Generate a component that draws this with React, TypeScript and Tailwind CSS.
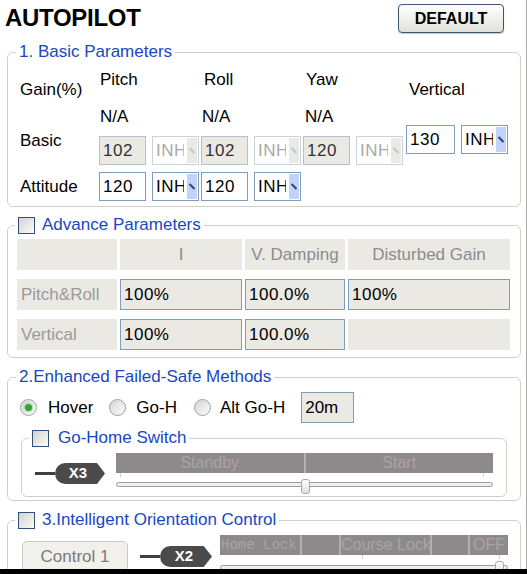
import React from 'react';

interface BoxProps {
  value: string;
  disabled?: boolean;
  width?: string;
}

function Box({ value, disabled, width = 'w-[47px]' }: BoxProps) {
  return (
    <div
      className={`${width} h-[29px] shrink-0 border pl-[3px] text-[17px] leading-[27px] tracking-[0.5px] ${
        disabled ? 'border-[#b4c1ce] bg-[#ebe9e4] text-[#333]' : 'border-[#7f9db9] bg-white text-black'
      }`}
    >
      {value}
    </div>
  );
}

function Select({ disabled }: { disabled?: boolean }) {
  return (
    <div
      className={`ml-[6px] flex h-[29px] w-[47px] shrink-0 border bg-white ${
        disabled ? 'border-[#c9d3dd] text-[#a9a9a9]' : 'border-[#7f9db9] text-black'
      }`}
    >
      <span className="w-[31px] shrink-0 overflow-hidden whitespace-nowrap pl-[3px] text-[17px] leading-[27px] tracking-[0.5px]">
        INH
      </span>
      <span className="flex-1" />
      <span
        className={`my-[1px] mr-[1px] flex w-[10px] items-center justify-center ${
          disabled ? 'bg-[#e9e9e5]' : 'bg-[#c2d3f7]'
        }`}
      >
        <span className={`h-[7px] w-[2px] -rotate-45 ${disabled ? 'bg-[#c4c4c4]' : 'bg-[#24468f]'}`} />
      </span>
    </div>
  );
}

function Check() {
  return (
    <span className="block h-[17px] w-[17px] shrink-0 border border-[#30507a] bg-linear-to-br from-[#d3d3cd] to-[#fbfbf9]" />
  );
}

function Radio({ on }: { on?: boolean }) {
  return (
    <span className="flex h-[17px] w-[17px] shrink-0 items-center justify-center rounded-full border border-[#98a3ad] bg-linear-to-br from-[#d6d6d0] to-[#fcfcfa]">
      {on && <span className="h-[7px] w-[7px] rounded-full bg-[#36a336] shadow-[0_0_2px_1px_#a6dca6]" />}
    </span>
  );
}

function Connector({ label, pill = 'w-[50px]' }: { label: string; pill?: string }) {
  return (
    <div className="flex shrink-0 items-center">
      <span className="h-[3px] w-[20px] bg-[#3f3f3f]" />
      <span
        className={`${pill} flex h-[21px] items-center justify-center rounded-l-full bg-[#4a4a4a] pr-[4px] text-[15px] font-bold text-white [clip-path:polygon(0_0,84%_0,100%_50%,84%_100%,0_100%)]`}
      >
        {label}
      </span>
    </div>
  );
}

function Divider() {
  return <span className="w-[2px] shrink-0 bg-[#b3afb1]" />;
}

export default function App() {
  const cellLabel = 'flex h-[31px] items-center bg-[#ebe9e4] pl-[4px] text-[17px] text-[#9a9a9a]';
  const cellHead = 'flex h-[31px] items-center justify-center bg-[#ebe9e4] text-[17px] text-[#8c8c8c]';
  const cellValue = 'flex h-[31px] items-center border border-[#7f9db9] bg-[#ebe9e4] pl-[3px] text-[17px] tracking-[0.5px] text-black';

  return (
    <div className="flex h-[574px] w-[527px] flex-col overflow-hidden bg-white font-['Liberation_Sans',Arial,sans-serif] text-black">
      <div className="flex-1 overflow-hidden border-r border-r-[#a9a9a9]">
        {/* header */}
        <div className="flex items-start justify-between pl-[5px] pr-[22px] pt-[4px]">
          <h1 className="text-[24px] font-bold leading-[28px] tracking-[-0.3px]">AUTOPILOT</h1>
          <button className="h-[29px] w-[106px] rounded-[4px] border border-[#3d5570] bg-linear-to-b from-white to-[#e1e1db] text-[16px] font-bold shadow-[0_1px_1px_#c8c8c8]">
            DEFAULT
          </button>
        </div>

        {/* 1. basic */}
        <fieldset className="ml-[7px] mt-[9px] w-[514px] rounded-[6px] border border-[#d0d0c6] pb-[5px]">
          <legend className="ml-[8px] px-[3px] text-[17px] leading-[20px] text-[#1747c4]">1. Basic Parameters</legend>
          <div className="flex pl-[12px] text-[17px] leading-[20px]">
            <div className="flex w-[79px] shrink-0 flex-col">
              <span className="mt-[18px]">Gain(%)</span>
              <span className="mt-[31px]">Basic</span>
              <span className="mt-[26px]">Attitude</span>
            </div>
            <div className="flex w-[102px] shrink-0 flex-col">
              <span className="mt-[8px] pl-[1px]">Pitch</span>
              <span className="mt-[17px] pl-[1px]">N/A</span>
              <div className="mt-[9px] flex">
                <Box value="102" disabled />
                <Select disabled />
              </div>
              <div className="mt-[7px] flex">
                <Box value="120" />
                <Select />
              </div>
            </div>
            <div className="flex w-[102px] shrink-0 flex-col">
              <span className="mt-[8px] pl-[3px]">Roll</span>
              <span className="mt-[17px] pl-[1px]">N/A</span>
              <div className="mt-[9px] flex">
                <Box value="102" disabled />
                <Select disabled />
              </div>
              <div className="mt-[7px] flex">
                <Box value="120" />
                <Select />
              </div>
            </div>
            <div className="flex w-[102px] shrink-0 flex-col">
              <span className="mt-[8px] pl-[3px]">Yaw</span>
              <span className="mt-[17px] pl-[2px]">N/A</span>
              <div className="mt-[9px] flex">
                <Box value="120" disabled />
                <Select disabled />
              </div>
            </div>
            <div className="flex w-[102px] shrink-0 flex-col pl-[1px]">
              <span className="mt-[18px] pl-[3px]">Vertical</span>
              <div className="mt-[25px] flex">
                <Box value="130" width="w-[49px]" />
                <Select />
              </div>
            </div>
          </div>
        </fieldset>

        {/* advance */}
        <fieldset className="ml-[7px] mt-[8px] w-[514px] rounded-[6px] border border-[#d0d0c6] pb-[7px]">
          <legend className="ml-[7px] px-[3px]">
            <span className="flex items-center gap-[7px] text-[17px] leading-[20px] text-[#1747c4]">
              <Check />
              Advance Parameters
            </span>
          </legend>
          <div className="grid grid-cols-[100px_122px_100px_162px] gap-x-[3px] gap-y-[9px] pl-[9px] pt-[4px]">
            <div className={cellHead} />
            <div className={cellHead}>I</div>
            <div className={cellHead}>V. Damping</div>
            <div className={cellHead}>Disturbed Gain</div>

            <div className={cellLabel}>Pitch&amp;Roll</div>
            <div className={cellValue}>100%</div>
            <div className={cellValue}>100.0%</div>
            <div className={cellValue}>100%</div>

            <div className={cellLabel}>Vertical</div>
            <div className={cellValue}>100%</div>
            <div className={cellValue}>100.0%</div>
            <div className={cellHead} />
          </div>
        </fieldset>

        {/* 2. failsafe */}
        <fieldset className="ml-[7px] mt-[9px] w-[514px] rounded-[6px] border border-[#d0d0c6] pb-[3px]">
          <legend className="ml-[8px] px-[3px] text-[17px] leading-[20px] text-[#1747c4]">
            2.Enhanced Failed-Safe Methods
          </legend>
          <div className="mt-[5px] flex h-[31px] items-center pl-[12px] text-[17px]">
            <Radio on />
            <span className="ml-[11px]">Hover</span>
            <span className="ml-[16px]"><Radio /></span>
            <span className="ml-[10px]">Go-H</span>
            <span className="ml-[17px]"><Radio /></span>
            <span className="ml-[9px]">Alt Go-H</span>
            <div className="ml-[16px] flex h-[31px] w-[53px] items-center border border-[#7f9db9] bg-[#ebe9e4] pl-[3px]">
              20m
            </div>
          </div>

          <fieldset className="ml-[13px] mt-[5px] w-[486px] rounded-[6px] border border-[#d0d0c6] pb-[9px]">
            <legend className="ml-[7px] px-[3px]">
              <span className="flex items-center gap-[9px] text-[17px] leading-[20px] text-[#1747c4]">
                <Check />
                Go-Home Switch
              </span>
            </legend>
            <div className="flex items-start pl-[13px] pt-[5px]">
              <div className="mt-[10px]">
                <Connector label="X3" />
              </div>
              <div className="ml-[11px] flex w-[377px] flex-col">
                <div className="flex h-[20px] bg-[#8e8a8c] text-[16px] leading-[20px] text-[#a8a4a6]">
                  <span className="flex-1 text-center">Standby</span>
                  <Divider />
                  <span className="flex-1 text-center">Start</span>
                </div>
                <div className="flex h-[4px] justify-between pl-[4px] pr-[9px]">
                  <span className="w-[1px] bg-[#cfcfcf]" />
                  <span className="w-[1px] bg-[#cfcfcf]" />
                </div>
                <div className="relative mt-[5px] h-[5px] rounded-full border border-[#9d9d9d] bg-[#efefef]">
                  <span className="absolute left-[184px] top-[-4px] h-[15px] w-[9px] rounded-[3px] border border-[#a9a9a9] bg-linear-to-b from-white to-[#dedede]" />
                </div>
              </div>
            </div>
          </fieldset>
        </fieldset>

        {/* 3. orientation */}
        <fieldset className="ml-[7px] mt-[9px] w-[514px] rounded-[6px] border border-[#d0d0c6] pb-[10px]">
          <legend className="ml-[7px] px-[3px]">
            <span className="flex items-center gap-[7px] text-[17px] leading-[20px] text-[#1747c4]">
              <Check />
              3.Intelligent Orientation Control
            </span>
          </legend>
          <div className="flex items-start pl-[14px] pt-[5px]">
            <button className="mt-[6px] h-[31px] w-[106px] shrink-0 rounded-[5px] border border-[#cac9c0] bg-[#f1f0ea] text-[17px] text-[#7a7a7a]">
              Control 1
            </button>
            <div className="ml-[12px] mt-[11px]">
              <Connector label="X2" pill="w-[52px]" />
            </div>
            <div className="ml-[8px] flex w-[288px] flex-col">
              <div className="flex h-[20px] bg-[#8e8a8c] leading-[20px] text-[#a8a4a6]">
                <span className="w-[80px] shrink-0 overflow-hidden whitespace-nowrap pl-[1px] font-['Liberation_Mono',monospace] text-[14px]">
                  Home Lock
                </span>
                <Divider />
                <span className="w-[37px] shrink-0" />
                <Divider />
                <span className="w-[89px] shrink-0 overflow-hidden whitespace-nowrap text-[16px]">Course Lock</span>
                <Divider />
                <span className="w-[36px] shrink-0" />
                <Divider />
                <span className="flex-1 text-center text-[16px]">OFF</span>
              </div>
              <div className="flex h-[4px]">
                <span className="ml-[142px] w-[1px] bg-[#cfcfcf]" />
                <span className="ml-[136px] w-[1px] bg-[#cfcfcf]" />
              </div>
              <div className="relative mt-[6px] h-[5px] rounded-full border border-[#9d9d9d] bg-[#efefef]">
                <span className="absolute left-[274px] top-[-5px] h-[15px] w-[9px] rounded-[3px] border border-[#a9a9a9] bg-linear-to-b from-white to-[#dedede]" />
              </div>
            </div>
          </div>
        </fieldset>
      </div>
      <div className="h-[5px] shrink-0 bg-black" />
    </div>
  );
}
